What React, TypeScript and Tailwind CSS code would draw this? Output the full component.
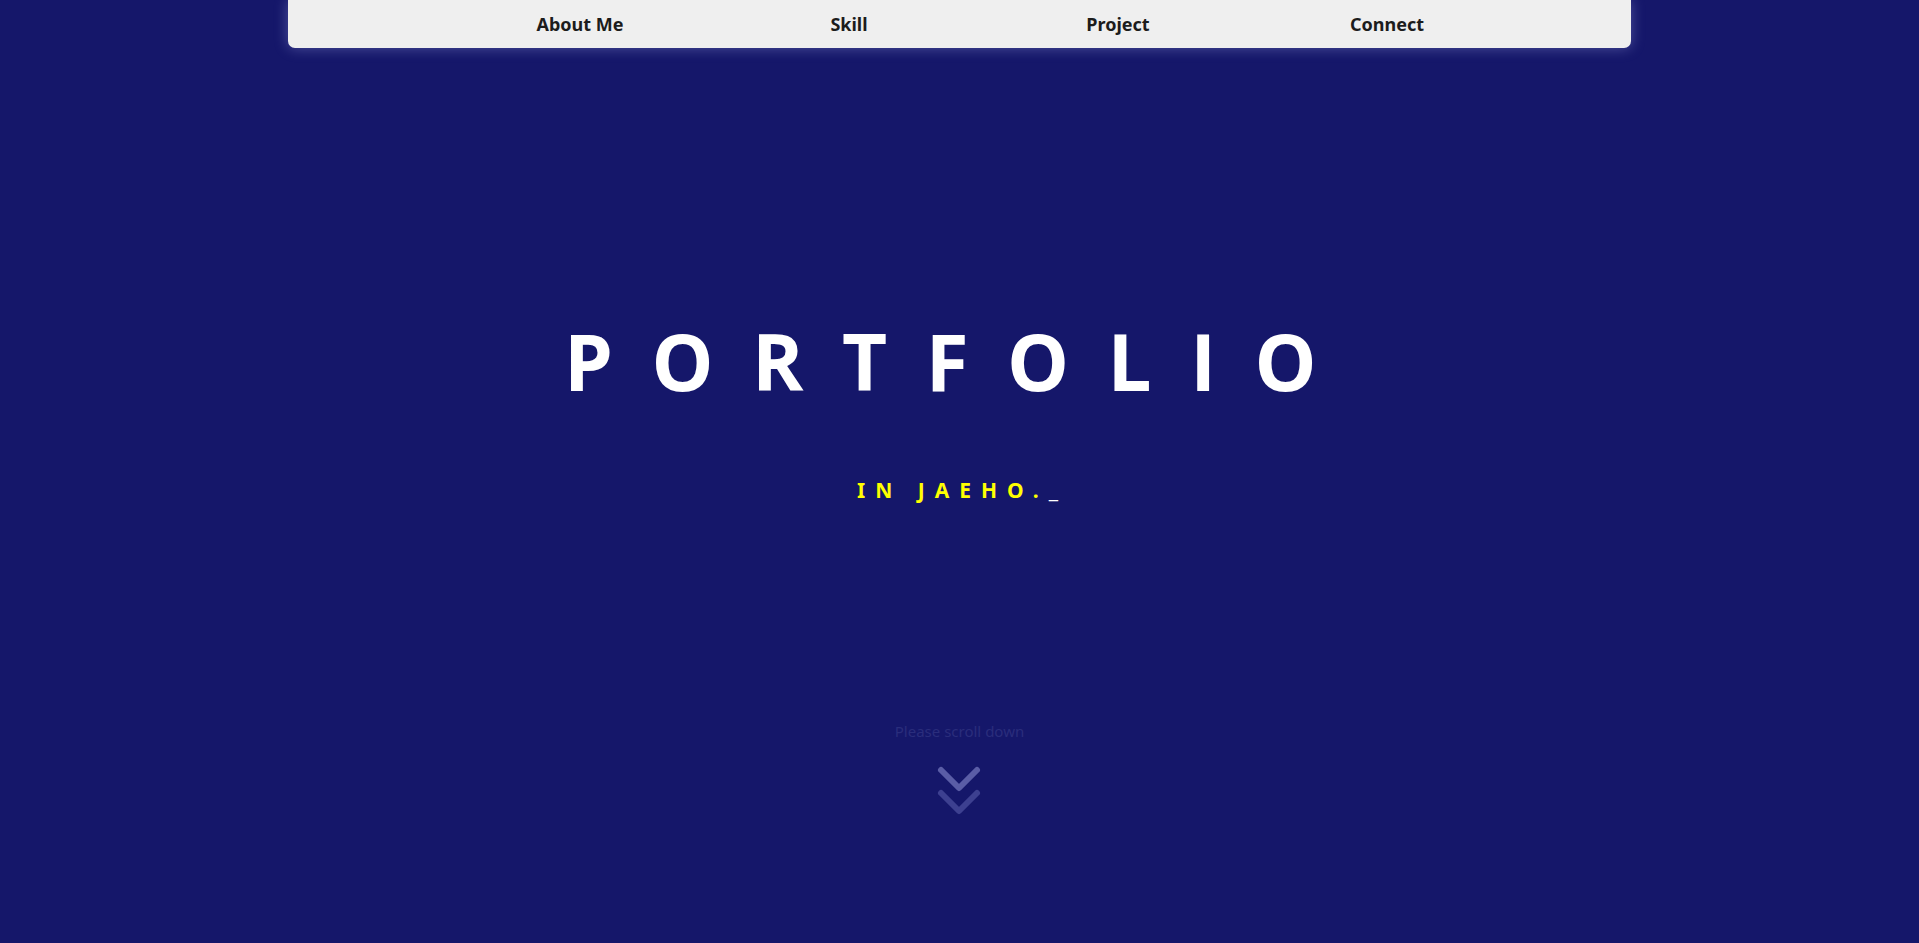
import React from "react";

const menus = ["About Me", "Skill", "Project", "Connect"];

function Nav() {
  return (
    <nav className="mx-auto flex h-[48px] w-[70%] items-center justify-center rounded-b-[7px] bg-[#efefef] pl-[48px] shadow-[0_0_14px_rgba(190,195,255,0.35)]">
      {menus.map((m) => (
        <a
          key={m}
          className="w-[269px] text-center text-[18px] font-bold text-[#1c1c1c]"
        >
          {m}
        </a>
      ))}
    </nav>
  );
}

function ScrollDown() {
  return (
    <div className="mt-[223px] flex flex-col items-center">
      <p className="text-[15px] leading-none text-[#2a2d7c]">Please scroll down</p>
      <svg
        width="48"
        height="56"
        viewBox="0 0 48 56"
        fill="none"
        strokeWidth="6"
        strokeLinecap="round"
        strokeLinejoin="round"
        className="mt-[25px]"
      >
        <path d="M6 6 L24 24 L42 6" stroke="#5a5da6" />
        <path d="M6 29 L24 47 L42 29" stroke="#3d4090" />
      </svg>
    </div>
  );
}

export default function App() {
  return (
    <div
      className="h-[943px] overflow-hidden bg-[#15176a]"
      style={{ fontFamily: '"Noto Sans", "Open Sans", sans-serif' }}
    >
      <Nav />
      <section className="flex flex-col items-center">
        <h1 className="mt-[274px] font-['Open_Sans',sans-serif] text-[78px] font-bold leading-none tracking-[38.5px] text-white">
          PORTFOLIO
        </h1>
        <p className="mt-[80px] pl-[6px] text-[21px] font-bold leading-none tracking-[10px] text-[#ffff00]">
          IN JAEHO.<span className="font-normal text-white">_</span>
        </p>
        <ScrollDown />
      </section>
    </div>
  );
}
